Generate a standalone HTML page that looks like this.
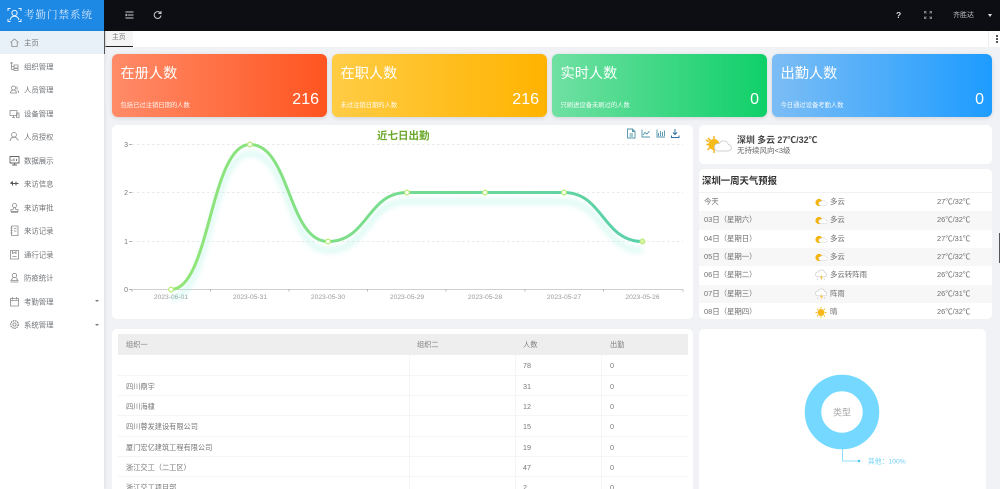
<!DOCTYPE html>
<html lang="zh"><head><meta charset="utf-8"><title>考勤门禁系统</title>
<style>
*{box-sizing:border-box;margin:0;padding:0}
html,body{width:1000px;height:489px;overflow:hidden;background:#f0f2f5}
body{font-family:"Liberation Sans","Noto Sans CJK SC",sans-serif;color:#666}
#w{position:relative;width:1000px;height:489px;overflow:hidden;filter:blur(.35px)}
.a{position:absolute;white-space:nowrap}
.t{line-height:1;white-space:nowrap;position:absolute}
.side{left:0;top:31px;width:104px;height:458px;background:#fff;box-shadow:1px 0 4px rgba(0,0,0,.08)}
.mi{position:absolute;left:24px;font-size:7.4px;line-height:10px;color:#707478;white-space:nowrap;transform:translateY(.6px)}
.ic{position:absolute;left:9px;width:11px;height:11px;fill:none;stroke:#8a8a8a;stroke-width:.8}
.card{position:absolute;top:54px;height:63px;border-radius:6px;color:#fff;box-shadow:0 1px 4px rgba(0,0,0,.13)}
.card b{position:absolute;left:8.5px;top:11.5px;font-weight:400;font-size:14.2px;line-height:17px;white-space:nowrap}
.card i{position:absolute;left:8.5px;top:48px;font-style:normal;font-size:6.3px;line-height:8px;white-space:nowrap;opacity:.92}
.card u{position:absolute;right:8px;top:36px;text-decoration:none;font-size:16px;line-height:20px}
.box{position:absolute;background:#fff;border-radius:5px}
.row{position:absolute;left:0;width:293px;height:18.3px;font-size:7.4px;line-height:18px;color:#6e6e6e}
.row.e{background:#f7f7f7}
.row span{position:absolute;white-space:nowrap;top:0}
.row svg{position:absolute;top:3px;left:115px;width:14px;height:13px}
.tr{position:absolute;left:6px;width:570px;border-bottom:1px solid #f5f5f5;font-size:7.2px;color:#777}
.tr span{position:absolute;white-space:nowrap;line-height:20px;top:1px}
.l1{left:8px}.l2{left:299px}.l3{left:405px}.l4{left:492px}
.vl{position:absolute;top:355px;width:1px;height:134px;background:#f5f5f5}
</style></head><body><div id="w">
<svg width="0" height="0" style="position:absolute"><defs>
<symbol id="pc" viewBox="0 0 14 13"><circle cx="5" cy="6.500" r="3.600" fill="#f5b410"/><path d="M6.500 9.500h4.800a1.800 1.800 0 0 0 .2-3.600 2.500 2.500 0 0 0-4.400-.4 2 2 0 0 0-.6 4z" fill="#fff" stroke="#d2d2d2" stroke-width=".5"/></symbol>
<symbol id="rn" viewBox="0 0 14 13"><path d="M3.500 7.800h7a2.200 2.200 0 0 0 .2-4.400 3.400 3.400 0 0 0-6.400-.4 2.400 2.400 0 0 0-.8 4.800z" fill="#fff" stroke="#c8c8c8" stroke-width=".6"/><path d="M7.600 5.500 6 9h1.400l-.8 3 2.400-3.800H7.600z" fill="#f3c13a"/><path d="M4 9.500 3.400 11M10.500 9.500 10 11" stroke="#c4c4c4" stroke-width=".6"/></symbol>
<symbol id="sn" viewBox="0 0 14 13"><circle cx="7" cy="6.500" r="3.500" fill="#f6b81a"/><path d="M7 1v1.500M7 10.500V12M1.500 6.500H3M11 6.500h1.500M3.100 2.600l1 1M9.900 9.400l1 1M3.100 10.400l1-1M9.900 3.600l1-1" stroke="#f6b81a" stroke-width="1"/></symbol>
</defs></svg>

<!-- top -->
<div class="a" style="left:104px;top:0;width:896px;height:31px;background:#0c0e14"></div>
<div class="a" style="left:0;top:0;width:104px;height:31px;background:#1e88e5"></div>
<svg class="a" style="left:7px;top:6px" width="15" height="18" viewBox="0 0 15 18" fill="none" stroke="#e8f3ff" stroke-width="1"><path d="M1 5V2.500h2.500M11.500 2.500H14V5M1 13v2.500h2.500M11.500 15.500H14V13"/><circle cx="7.500" cy="7" r="2.600"/><path d="M3 14c.6-2.600 2.400-3.800 4.500-3.800s3.900 1.200 4.500 3.800"/></svg>
<div class="t" style="left:24px;top:10px;font-family:'Noto Serif CJK SC',serif;font-size:10.500px;letter-spacing:1px;color:#d5e9fb">考勤门禁系统</div>
<svg class="a" style="left:125px;top:11px" width="9" height="8" viewBox="0 0 9 8" stroke="#ccc" stroke-width="1" fill="none"><path d="M.5 1h8M3 4h5.500M.5 7h8M.5 3l1.500 1-1.500 1"/></svg>
<svg class="a" style="left:153px;top:10px" width="9" height="10" viewBox="0 0 9 10" stroke="#ccc" stroke-width="1" fill="none"><path d="M7.500 3.200A3.400 3.400 0 1 0 8 5.500M8 1v2.500H5.500"/></svg>
<div class="t" style="left:896px;top:11px;font-size:8.500px;font-weight:700;color:#ddd">?</div>
<svg class="a" style="left:924px;top:11px" width="8" height="8" viewBox="0 0 8 8" stroke="#999" stroke-width=".8" fill="none"><path d="M.5 2.500V.5h2M5.500.5h2v2M.5 5.500v2h2M5.500 7.500h2v-2M2.500 2.500.8.8M5.500 2.500 7.200.8M2.500 5.500.8 7.200M5.500 5.500l1.700 1.700"/></svg>
<div class="t" style="left:953px;top:11.500px;font-size:7px;color:#c0c0c0">齐胜达</div>
<div class="a" style="left:988px;top:14px;border:2.500px solid transparent;border-top:3px solid #ddd;border-bottom:0"></div>

<!-- tabs -->
<div class="a" style="left:104px;top:31px;width:896px;height:16px;background:#fff"></div>
<div class="a" style="left:105px;top:31px;width:28px;height:16px;background:#f5f5f5;border-bottom:1px solid #222;border-left:1px solid #e4e4e4"></div>
<div class="t" style="left:112px;top:35px;font-size:6.800px;color:#777">主页</div>
<div class="a" style="left:988px;top:31px;width:1px;height:16px;background:#eee"></div>
<div class="a" style="left:996px;top:35px;width:2px;height:2px;background:#555;box-shadow:0 3px 0 #555,0 6px 0 #555"></div>

<!-- sidebar -->
<div class="a side"></div>
<div class="a" style="left:0;top:31px;width:104px;height:23px;background:#e8f1f8"></div>
<div class="a" style="left:104px;top:31px;width:1px;height:23px;background:#555"></div>
<svg class="ic" style="top:37px" viewBox="0 0 11 11"><path d="M1.500 5.500 5.500 2l4 3.500M2.800 5v4.500h5.400V5"/></svg><div class="mi" style="top:38px">主页</div>
<svg class="ic" style="top:61px" viewBox="0 0 11 11"><path d="M2 1.500h1v1H2zM2.500 2.500v6H5M2.500 5.500H5M5 4h4v3H5zM5 7.500h4v2H5z"/></svg><div class="mi" style="top:61.500px">组织管理</div>
<svg class="ic" style="top:84px" viewBox="0 0 11 11"><circle cx="4.500" cy="4" r="2"/><path d="M1.500 9c.3-2 1.500-3 3-3s2.700 1 3 3zM7.500 2.500a2 2 0 0 1 0 3M8.500 6.500c.7.400 1 1.200 1.200 2.500"/></svg><div class="mi" style="top:85px">人员管理</div>
<svg class="ic" style="top:108px" viewBox="0 0 11 11"><path d="M1 2.500h7v5H1zM3 9.500h3M4.500 7.500v2M7.500 5h2.500v4.500H7.500z"/></svg><div class="mi" style="top:108.500px">设备管理</div>
<svg class="ic" style="top:131px" viewBox="0 0 11 11"><circle cx="5" cy="3.800" r="2.400"/><path d="M1 10c.4-2.500 1.900-3.800 4-3.800 1.400 0 2.500.6 3.200 1.700M8 8l1.500 1.500"/></svg><div class="mi" style="top:132px">人员授权</div>
<svg class="ic" style="top:155px;stroke:#666;stroke-width:.9" viewBox="0 0 11 11"><path d="M1 1.500h9v6.500H1zM3 10h5M5.500 8v2M3 6V4.500M5 6V3.500M7.500 6V4"/></svg><div class="mi" style="top:155.500px">数据展示</div>
<svg class="ic" style="top:178px;stroke:#555;stroke-width:1" viewBox="0 0 11 11"><path d="M1.500 5.500h8M3.500 3.500v4M7 3.500v4M1.500 5.500l2-2"/></svg><div class="mi" style="top:179px">来访信息</div>
<svg class="ic" style="top:202px" viewBox="0 0 11 11"><circle cx="5.500" cy="3.500" r="2"/><path d="M5 5.500 4 7.500H2v2h7v-2H7l-1-2M2 10.300h7"/></svg><div class="mi" style="top:202.500px">来访审批</div>
<svg class="ic" style="top:225px" viewBox="0 0 11 11"><path d="M2.500 1h6.500v9.500H2.500zM1.500 3h2M1.500 5.500h2M1.500 8h2M5 3.500h2.500M5 6h2.500"/></svg><div class="mi" style="top:226px">来访记录</div>
<svg class="ic" style="top:249px" viewBox="0 0 11 11"><path d="M1.500 1.500h8v8.500h-8zM3.500 1.500v3l2-1 1.500 1v-3M3.500 7.500h4"/></svg><div class="mi" style="top:249.500px">通行记录</div>
<svg class="ic" style="top:272px" viewBox="0 0 11 11"><circle cx="5.500" cy="3.500" r="2.200"/><path d="M3.800 6 2 8.500h7L7.200 6M1.500 10h8"/></svg><div class="mi" style="top:273px">防疫统计</div>
<svg class="ic" style="top:296px" viewBox="0 0 11 11"><path d="M1.500 2.500h8v7.500h-8zM3.500 1v2.500M7.500 1v2.500M1.500 4.500h8"/></svg><div class="mi" style="top:296.500px">考勤管理</div>
<svg class="ic" style="top:319px" viewBox="0 0 11 11"><circle cx="5.500" cy="5.500" r="1.600"/><circle cx="5.500" cy="5.500" r="3.800" stroke-dasharray="1.500 .8" stroke-width="1.300"/></svg><div class="mi" style="top:320px">系统管理</div>
<div class="a" style="left:95px;top:300px;border:2px solid transparent;border-top:2.500px solid #777;border-bottom:0"></div>
<div class="a" style="left:95px;top:323.500px;border:2px solid transparent;border-top:2.500px solid #777;border-bottom:0"></div>

<!-- stat cards -->
<div class="card" style="left:112px;width:215px;background:linear-gradient(90deg,#ff8b68,#ff5520)"><b>在册人数</b><i>包括已过注销日期的人数</i><u>216</u></div>
<div class="card" style="left:332px;width:215px;background:linear-gradient(90deg,#ffcc45,#ffb300)"><b>在职人数</b><i>未过注销日期的人数</i><u>216</u></div>
<div class="card" style="left:552px;width:215px;background:linear-gradient(90deg,#70e0a2,#0fd069)"><b>实时人数</b><i>只刷进设备未刷过的人数</i><u>0</u></div>
<div class="card" style="left:772px;width:220px;background:linear-gradient(90deg,#7cbdf5,#1d9cff)"><b>出勤人数</b><i>今日通过设备考勤人数</i><u>0</u></div>

<!-- chart -->
<div class="box" style="left:112px;top:125px;width:581px;height:194px"></div>
<div class="t" style="left:377px;top:131px;font-size:10.500px;font-weight:700;color:#6aa82a">近七日出勤</div>
<svg class="a" style="left:105px;top:120px" width="595" height="200" viewBox="105 120 595 200" font-family="'Liberation Sans','Noto Sans CJK SC',sans-serif">
<defs>
<linearGradient id="g" gradientUnits="userSpaceOnUse" x1="171" y1="0" x2="642" y2="0"><stop offset="0" stop-color="#92e676"/><stop offset="1" stop-color="#58d0ab"/></linearGradient>
<filter id="bl" x="-10%" y="-20%" width="120%" height="140%"><feGaussianBlur stdDeviation="3"/></filter>
</defs>
<g stroke="#e2e2e2" stroke-width=".8" stroke-dasharray="2.500 2.500"><path d="M132 144.500H683M132 192.500H683M132 241.500H683"/></g>
<path d="M132 289.500H683" stroke="#d0d0d0" stroke-width="1"/>
<g stroke="#999" stroke-width=".7"><path d="M132 289.500v2M210.500 289.500v2M289 289.500v2M367.500 289.500v2M446 289.500v2M525 289.500v2M603.500 289.500v2M683 289.500v2M129 144.500h3M129 192.500h3M129 241.500h3M129 289.500h3"/></g>
<g font-size="7" fill="#777" text-anchor="end"><text x="128" y="147">3</text><text x="128" y="195">2</text><text x="128" y="244">1</text><text x="128" y="292">0</text></g>
<g font-size="6.700" fill="#999" text-anchor="middle"><text x="171" y="299">2023-06-01</text><text x="250" y="299">2023-05-31</text><text x="328" y="299">2023-05-30</text><text x="407" y="299">2023-05-29</text><text x="485" y="299">2023-05-28</text><text x="564" y="299">2023-05-27</text><text x="642.500" y="299">2023-05-26</text></g>
<path d="M171 289.500C210 289.500 210 144.500 250 144.500C290 144.500 288 241.500 328 241.500C368 241.500 367 192.500 407 192.500H564C603 192.500 603 241.500 642.500 241.500" fill="none" stroke="#9ff0e0" stroke-width="4" opacity=".5" filter="url(#bl)" transform="translate(0 9)"/>
<path d="M171 289.500C210 289.500 210 144.500 250 144.500C290 144.500 288 241.500 328 241.500C368 241.500 367 192.500 407 192.500H564C603 192.500 603 241.500 642.500 241.500" fill="none" stroke="url(#g)" stroke-width="3"/>
<g fill="#fff" stroke="#bdec7e" stroke-width="1.300"><circle cx="171" cy="289.500" r="2.300"/><circle cx="250" cy="144.500" r="2.300"/><circle cx="328" cy="241.500" r="2.300"/><circle cx="407" cy="192.500" r="2.300"/><circle cx="485" cy="192.500" r="2.300"/><circle cx="564" cy="192.500" r="2.300"/><circle cx="642.500" cy="241.500" r="2.300" fill="#d8f5a8"/></g>
<g fill="none" stroke="#4f93a8" stroke-width=".9">
<path d="M627.500 129h5l2.500 2.500v6.500h-7.500zM632.500 129v2.500h2.500M629.500 134h3.500M629.500 136h3.500"/>
<path d="M642 129.500v7.500h8M643 135l2-2.500 2 1.500 2.500-3"/>
<path d="M657 129.500v7.500h8M658.500 136v-3M660.500 136v-5M662.500 136v-4M664.500 136v-5.500"/>
<path d="M675 129v5.500M673 132.500l2 2 2-2M671.500 135.500v2h7.500v-2" stroke="#2f6f9f" stroke-width="1"/>
</g>
</svg>

<!-- weather -->
<div class="box" style="left:699px;top:125px;width:293px;height:39px"></div>
<svg class="a" style="left:705px;top:135px" width="27" height="20" viewBox="0 0 27 20"><g stroke="#f3b014" stroke-width="1.400"><path d="M9 1v3M9 15v3M1.500 9.500h3M1 5l3 1.500M2.500 15l2.500-2.500M3 3l2.500 2.500M13 15l-1.500-2"/></g><circle cx="9" cy="9.500" r="5.500" fill="#f6bb18"/><path d="M12 16h11a3.200 3.200 0 0 0 .3-6.400 4.800 4.800 0 0 0-9-1A3.700 3.700 0 0 0 12 16z" fill="#fff" stroke="#c4c4c4" stroke-width=".7"/></svg>
<div class="t" style="left:737px;top:135.500px;font-size:8.900px;font-weight:700;color:#444">深圳 多云 27℃/32℃</div>
<div class="t" style="left:737px;top:146.500px;font-size:7.500px;color:#666">无持续风向&lt;3级</div>

<div class="box" style="left:699px;top:169px;width:293px;height:150px;overflow:hidden">
<div class="t" style="left:3px;top:7px;font-size:9.400px;font-weight:700;color:#333">深圳一周天气预报</div>
<div class="a" style="left:0;top:23px;width:293px;height:1px;background:#f2f2f2"></div>
<div class="row" style="top:24px"><span style="left:5px">今天</span><svg><use href="#pc"/></svg><span style="left:131px">多云</span><span style="left:238px">27℃/32℃</span></div>
<div class="row e" style="top:42.300px"><span style="left:5px">03日（星期六）</span><svg><use href="#pc"/></svg><span style="left:131px">多云</span><span style="left:238px">26℃/32℃</span></div>
<div class="row" style="top:60.600px"><span style="left:5px">04日（星期日）</span><svg><use href="#pc"/></svg><span style="left:131px">多云</span><span style="left:238px">27℃/31℃</span></div>
<div class="row e" style="top:78.900px"><span style="left:5px">05日（星期一）</span><svg><use href="#pc"/></svg><span style="left:131px">多云</span><span style="left:238px">27℃/32℃</span></div>
<div class="row" style="top:97.200px"><span style="left:5px">06日（星期二）</span><svg><use href="#rn"/></svg><span style="left:131px">多云转阵雨</span><span style="left:238px">26℃/32℃</span></div>
<div class="row e" style="top:115.500px"><span style="left:5px">07日（星期三）</span><svg><use href="#rn"/></svg><span style="left:131px">阵雨</span><span style="left:238px">26℃/31℃</span></div>
<div class="row" style="top:133.800px"><span style="left:5px">08日（星期四）</span><svg><use href="#sn"/></svg><span style="left:131px">晴</span><span style="left:238px">26℃/32℃</span></div>
</div>
<div class="a" style="left:999px;top:233px;width:1px;height:30px;background:#555"></div>

<!-- table -->
<div class="box" style="left:112px;top:329px;width:581px;height:170px"></div>
<div style="position:absolute;left:112px;top:0;width:581px;height:489px">
<div class="tr" style="top:334px;height:21px;background:#eeeeee;border:0;color:#808080"><span class="l1">组织一</span><span class="l2">组织二</span><span class="l3">人数</span><span class="l4">出勤</span></div>
<div class="tr" style="top:355px;height:20.500px"><span class="l3">78</span><span class="l4">0</span></div>
<div class="tr" style="top:375.500px;height:20px"><span class="l1">四川鼎宇</span><span class="l3">31</span><span class="l4">0</span></div>
<div class="tr" style="top:395.500px;height:20.500px"><span class="l1">四川海棣</span><span class="l3">12</span><span class="l4">0</span></div>
<div class="tr" style="top:416px;height:20.500px"><span class="l1">四川蓉发建设有限公司</span><span class="l3">15</span><span class="l4">0</span></div>
<div class="tr" style="top:436.500px;height:20px"><span class="l1">厦门宏亿建筑工程有限公司</span><span class="l3">19</span><span class="l4">0</span></div>
<div class="tr" style="top:456.500px;height:20.500px"><span class="l1">浙江交工（二工区）</span><span class="l3">47</span><span class="l4">0</span></div>
<div class="tr" style="top:477px;height:20px"><span class="l1">浙江交工项目部</span><span class="l3">2</span><span class="l4">0</span></div>
</div>
<div class="vl" style="left:409px"></div><div class="vl" style="left:515px"></div><div class="vl" style="left:601px"></div>

<!-- pie -->
<div class="box" style="left:699px;top:329px;width:287px;height:170px"></div>
<svg class="a" style="left:760px;top:340px" width="180" height="149" viewBox="760 340 180 149" font-family="'Liberation Sans','Noto Sans CJK SC',sans-serif">
<circle cx="842" cy="412" r="29" fill="none" stroke="#74d8ff" stroke-width="16.500"/>
<text x="842" y="415.500" font-size="9" fill="#aaa" text-anchor="middle">类型</text>
<path d="M842.500 449v12H859" fill="none" stroke="#74d8ff" stroke-width=".8"/>
<circle cx="859" cy="461" r="1.300" fill="#4cc6f5"/>
<text x="868" y="463.500" font-size="6.800" fill="#6fd2f7">其他：100%</text>
</svg>
</div></body></html>
